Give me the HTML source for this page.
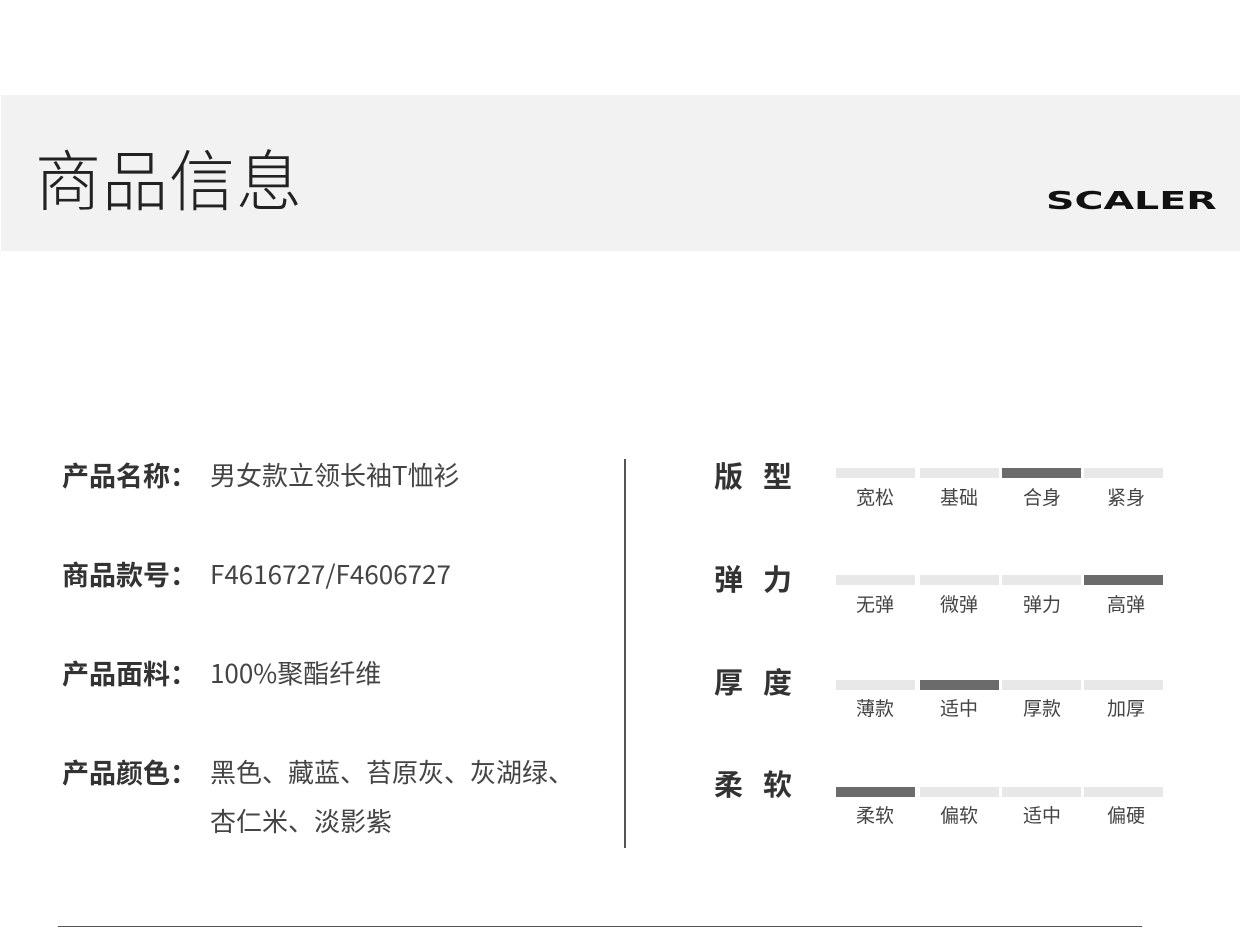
<!DOCTYPE html>
<html><head><meta charset="utf-8"><style>
body{margin:0;width:1240px;height:944px;background:#fff;position:relative;overflow:hidden;font-family:"Noto Sans CJK SC","Liberation Sans",sans-serif;color:#333}
.hd{position:absolute;left:1px;top:95px;width:1239px;height:156px;background:#f2f2f2}
.t{position:absolute;left:35px;top:132px;font-size:66px;color:#222;letter-spacing:1px;line-height:90px;font-weight:300}
.logo{position:absolute;left:1046px;top:189px;font-family:"DejaVu Sans",sans-serif;font-weight:bold;font-size:26px;color:#111;letter-spacing:0;transform:scale(1.52,0.95);transform-origin:left top;line-height:26px}
.l{position:absolute;left:62px;font-size:27px;font-weight:bold;color:#333;line-height:36px}
.v{position:absolute;left:210px;font-size:26px;color:#444;line-height:36px}
.k{position:absolute;left:714px;font-size:29px;font-weight:bold;color:#333;letter-spacing:20px;line-height:36px}
.b{position:absolute;height:10px;background:#e8e8e8}
.b.on{background:#6b6b6b}
.c{position:absolute;font-size:19px;color:#444;width:80px;text-align:center;line-height:24px}
</style></head><body>
<div class="hd"></div>
<div class="t">商品信息</div>
<div class="logo">SCALER</div>
<div class="l" style="top:457px">产品名称：</div><div class="v" style="top:457px">男女款立领长袖T恤衫</div>
<div class="l" style="top:556px">商品款号：</div><div class="v" style="top:556px">F4616727/F4606727</div>
<div class="l" style="top:655px">产品面料：</div><div class="v" style="top:655px">100%聚酯纤维</div>
<div class="l" style="top:754px">产品颜色：</div><div class="v" style="top:754px">黑色、藏蓝、苔原灰、灰湖绿、</div>
<div class="v" style="top:803px">杏仁米、淡影紫</div>
<div style="position:absolute;left:624px;top:459px;width:2px;height:389px;background:#555"></div>
<div style="position:absolute;left:58px;top:926px;width:1084px;height:1px;background:#555"></div>

<div class="k" style="top:457px">版型</div>
<div class="b" style="left:836px;top:468px;width:79px"></div><div class="b" style="left:920px;top:468px;width:79px"></div><div class="b on" style="left:1002px;top:468px;width:79px"></div><div class="b" style="left:1084px;top:468px;width:79px"></div>
<div class="c" style="left:835px;top:485px">宽松</div><div class="c" style="left:919px;top:485px">基础</div><div class="c" style="left:1002px;top:485px">合身</div><div class="c" style="left:1086px;top:485px">紧身</div>

<div class="k" style="top:560px">弹力</div>
<div class="b" style="left:836px;top:575px;width:79px"></div><div class="b" style="left:920px;top:575px;width:79px"></div><div class="b" style="left:1002px;top:575px;width:79px"></div><div class="b on" style="left:1084px;top:575px;width:79px"></div>
<div class="c" style="left:835px;top:592px">无弹</div><div class="c" style="left:919px;top:592px">微弹</div><div class="c" style="left:1002px;top:592px">弹力</div><div class="c" style="left:1086px;top:592px">高弹</div>

<div class="k" style="top:663px">厚度</div>
<div class="b" style="left:836px;top:680px;width:79px"></div><div class="b on" style="left:920px;top:680px;width:79px"></div><div class="b" style="left:1002px;top:680px;width:79px"></div><div class="b" style="left:1084px;top:680px;width:79px"></div>
<div class="c" style="left:835px;top:696px">薄款</div><div class="c" style="left:919px;top:696px">适中</div><div class="c" style="left:1002px;top:696px">厚款</div><div class="c" style="left:1086px;top:696px">加厚</div>

<div class="k" style="top:765px">柔软</div>
<div class="b on" style="left:836px;top:787px;width:79px"></div><div class="b" style="left:920px;top:787px;width:79px"></div><div class="b" style="left:1002px;top:787px;width:79px"></div><div class="b" style="left:1084px;top:787px;width:79px"></div>
<div class="c" style="left:835px;top:803px">柔软</div><div class="c" style="left:919px;top:803px">偏软</div><div class="c" style="left:1002px;top:803px">适中</div><div class="c" style="left:1086px;top:803px">偏硬</div>
</body></html>
